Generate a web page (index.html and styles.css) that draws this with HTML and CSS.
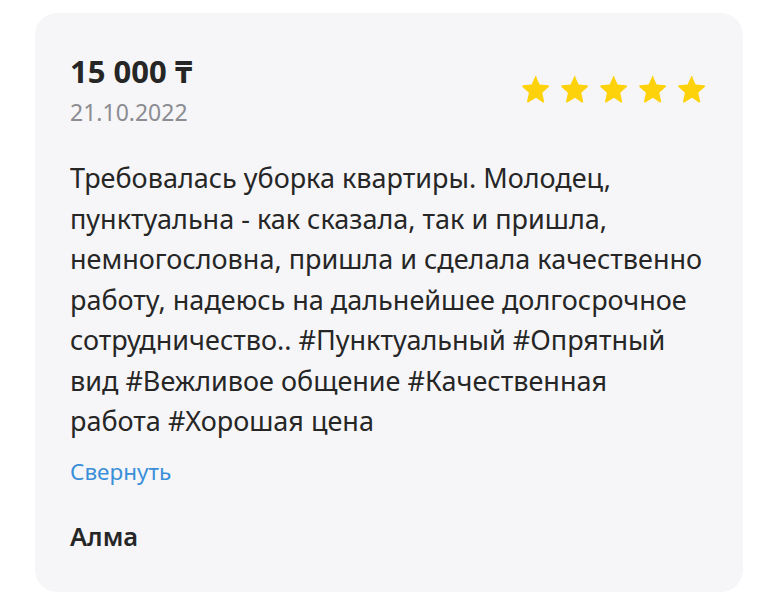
FILE: index.html
```html
<!DOCTYPE html>
<html>

<head>
    <title>Отзыв</title>
    <meta charset="utf-8">
    <link rel="stylesheet" href="styles.css">
</head>

<body>
    <div class="review">
        <div class="review-head">
            <div class="review-meta">
                <div class="price">15 000 ₸</div>
                <div class="date">21.10.2022</div>
            </div>
            <div class="stars">
                <svg viewBox="0 0 24 24"><path d="M12 2.6l2.7 6 6.4.6c.7.1.9.9.4 1.3l-4.8 4.3 1.4 6.3c.2.7-.6 1.2-1.2.8L12 18.6l-5.5 3.3c-.6.4-1.4-.1-1.2-.8l1.4-6.3-4.8-4.3c-.5-.4-.3-1.2.4-1.3l6.4-.6 2.7-6c.2-.6 1.1-.6 1.3 0z"/></svg>
                <svg viewBox="0 0 24 24"><path d="M12 2.6l2.7 6 6.4.6c.7.1.9.9.4 1.3l-4.8 4.3 1.4 6.3c.2.7-.6 1.2-1.2.8L12 18.6l-5.5 3.3c-.6.4-1.4-.1-1.2-.8l1.4-6.3-4.8-4.3c-.5-.4-.3-1.2.4-1.3l6.4-.6 2.7-6c.2-.6 1.1-.6 1.3 0z"/></svg>
                <svg viewBox="0 0 24 24"><path d="M12 2.6l2.7 6 6.4.6c.7.1.9.9.4 1.3l-4.8 4.3 1.4 6.3c.2.7-.6 1.2-1.2.8L12 18.6l-5.5 3.3c-.6.4-1.4-.1-1.2-.8l1.4-6.3-4.8-4.3c-.5-.4-.3-1.2.4-1.3l6.4-.6 2.7-6c.2-.6 1.1-.6 1.3 0z"/></svg>
                <svg viewBox="0 0 24 24"><path d="M12 2.6l2.7 6 6.4.6c.7.1.9.9.4 1.3l-4.8 4.3 1.4 6.3c.2.7-.6 1.2-1.2.8L12 18.6l-5.5 3.3c-.6.4-1.4-.1-1.2-.8l1.4-6.3-4.8-4.3c-.5-.4-.3-1.2.4-1.3l6.4-.6 2.7-6c.2-.6 1.1-.6 1.3 0z"/></svg>
                <svg viewBox="0 0 24 24"><path d="M12 2.6l2.7 6 6.4.6c.7.1.9.9.4 1.3l-4.8 4.3 1.4 6.3c.2.7-.6 1.2-1.2.8L12 18.6l-5.5 3.3c-.6.4-1.4-.1-1.2-.8l1.4-6.3-4.8-4.3c-.5-.4-.3-1.2.4-1.3l6.4-.6 2.7-6c.2-.6 1.1-.6 1.3 0z"/></svg>
            </div>
        </div>

        <p class="review-text">Требовалась уборка квартиры. Молодец,<br>
            пунктуальна - как сказала, так и пришла,<br>
            немногословна, пришла и сделала качественно<br>
            работу, надеюсь на дальнейшее долгосрочное<br>
            сотрудничество.. #Пунктуальный #Опрятный<br>
            вид #Вежливое общение #Качественная<br>
            работа #Хорошая цена</p>

        <a class="collapse" href="#">Свернуть</a>

        <div class="author">Алма</div>
    </div>
</body>

</html>
```

FILE: styles.css
```css
html, body {
    margin: 0px;
    background-color: #ffffff;
    font-family: "Noto Sans", sans-serif;
    color: #262626;
}
body {
    padding: 13px 34px 9px 35px;
}
.review {
    background-color: #f6f6f8;
    border-radius: 22px;
    padding: 39px 35px 41px 35px;
    display: flex;
    flex-direction: column;
}
.review-head {
    display: flex;
    justify-content: space-between;
    align-items: center;
}
.price {
    font-size: 31px;
    font-weight: 700;
    line-height: 38px;
}
.date {
    font-size: 23px;
    line-height: 30px;
    color: #8c8c92;
    margin-top: 7px;
}
.stars {
    display: flex;
    gap: 7px;
    margin-top: -2px;
}
.stars svg {
    width: 32px;
    height: 32px;
    fill: #fdd20a;
}
.review-text {
    margin: 31px 0px 0px 0px;
    font-size: 27px;
    line-height: 40.5px;
    white-space: nowrap;
}
.collapse {
    margin-top: 15px;
    font-size: 22.5px;
    line-height: 30px;
    color: #3a8fd8;
    text-decoration: none;
    align-self: flex-start;
}
.author {
    margin-top: 34px;
    font-size: 25.5px;
    font-weight: 600;
    line-height: 30px;
}
```
